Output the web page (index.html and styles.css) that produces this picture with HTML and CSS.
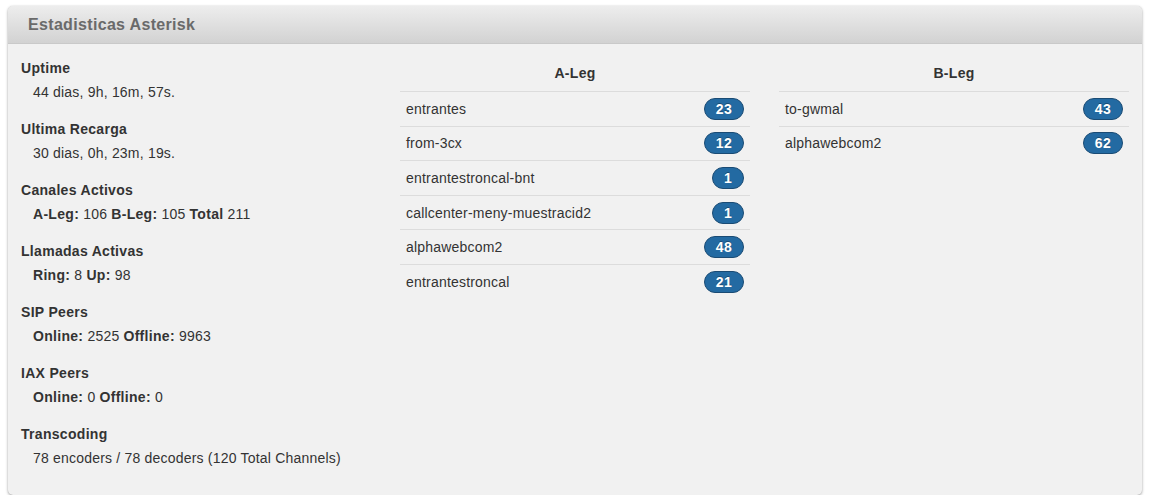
FILE: index.html
```html
<!DOCTYPE html>
<html lang="es">
<head>
<meta charset="utf-8">
<title>Estadisticas Asterisk</title>
<link rel="stylesheet" href="styles.css">
</head>
<body>
<div class="panel">
  <div class="panel-head">Estadisticas Asterisk</div>
  <div class="panel-body">
    <div class="col stats">
      <dl><dt>Uptime</dt><dd>44 dias, 9h, 16m, 57s.</dd></dl>
      <dl><dt>Ultima Recarga</dt><dd>30 dias, 0h, 23m, 19s.</dd></dl>
      <dl><dt>Canales Activos</dt><dd><b>A-Leg:</b> 106 <b>B-Leg:</b> 105 <b>Total</b> 211</dd></dl>
      <dl><dt>Llamadas Activas</dt><dd><b>Ring:</b> 8 <b>Up:</b> 98</dd></dl>
      <dl><dt>SIP Peers</dt><dd><b>Online:</b> 2525 <b>Offline:</b> 9963</dd></dl>
      <dl><dt>IAX Peers</dt><dd><b>Online:</b> 0 <b>Offline:</b> 0</dd></dl>
      <dl><dt>Transcoding</dt><dd>78 encoders / 78 decoders (120 Total Channels)</dd></dl>
    </div>
    <div class="col legs">
      <div class="legs-title">A-Leg</div>
      <div class="leg-row"><span>entrantes</span><span class="badge">23</span></div>
      <div class="leg-row"><span>from-3cx</span><span class="badge">12</span></div>
      <div class="leg-row"><span>entrantestroncal-bnt</span><span class="badge">1</span></div>
      <div class="leg-row"><span>callcenter-meny-muestracid2</span><span class="badge">1</span></div>
      <div class="leg-row"><span>alphawebcom2</span><span class="badge">48</span></div>
      <div class="leg-row"><span>entrantestroncal</span><span class="badge">21</span></div>
    </div>
    <div class="col legs">
      <div class="legs-title">B-Leg</div>
      <div class="leg-row"><span>to-gwmal</span><span class="badge">43</span></div>
      <div class="leg-row"><span>alphawebcom2</span><span class="badge">62</span></div>
    </div>
  </div>
</div>
</body>
</html>
```

FILE: styles.css
```css
html, body {
  margin: 0;
  padding: 0;
  background: #ffffff;
}
body {
  padding: 6px 8px 0 8px;
  font-family: "Liberation Sans", Arial, Helvetica, sans-serif;
  font-size: 14px;
  line-height: 20px;
  color: #333333;
  letter-spacing: 0.2px;
}
b, dt, .legs-title {
  letter-spacing: 0.3px;
}
.panel {
  width: 1134px;
  height: 489px;
  box-sizing: border-box;
  background: #f1f1f1;
  border-radius: 5px;
  box-shadow: 0 1px 3px rgba(0, 0, 0, 0.35), 0 0 1px rgba(0, 0, 0, 0.15);
  overflow: hidden;
}
.panel-head {
  height: 38px;
  box-sizing: border-box;
  padding: 9px 20px;
  font-size: 16px;
  font-weight: bold;
  line-height: 20px;
  letter-spacing: 0.33px;
  color: #6a6a6a;
  background: linear-gradient(to bottom, #ededed 0%, #d2d2d2 100%);
  border-bottom: 1px solid #c9c9c9;
}
.panel-body {
  display: grid;
  grid-template-columns: 350px 350px 350px;
  column-gap: 29px;
  padding: 11px 12px 0 13px;
}
.stats {
  padding-top: 3px;
}
dl {
  margin: 0 0 17px 0;
}
dt {
  font-weight: bold;
  line-height: 20px;
}
dd {
  margin: 4px 0 0 12px;
  line-height: 20px;
}
dd b {
  font-weight: bold;
}
.legs-title {
  text-align: center;
  font-weight: bold;
  padding: 8px 6px;
  line-height: 20px;
}
.leg-row {
  display: flex;
  justify-content: space-between;
  align-items: center;
  height: 34.6px;
  box-sizing: border-box;
  padding: 0 6px;
  border-top: 1px solid #dcdcdc;
}
.badge {
  display: inline-block;
  height: 22px;
  box-sizing: border-box;
  padding: 0 11px;
  border-radius: 11px;
  border: 1px solid #1a4b74;
  background: #236aa2;
  color: #ffffff;
  font-weight: bold;
  font-size: 14px;
  line-height: 20px;
  letter-spacing: 0.3px;
  text-shadow: 0 -1px 0 rgba(0, 0, 0, 0.3);
}
```
